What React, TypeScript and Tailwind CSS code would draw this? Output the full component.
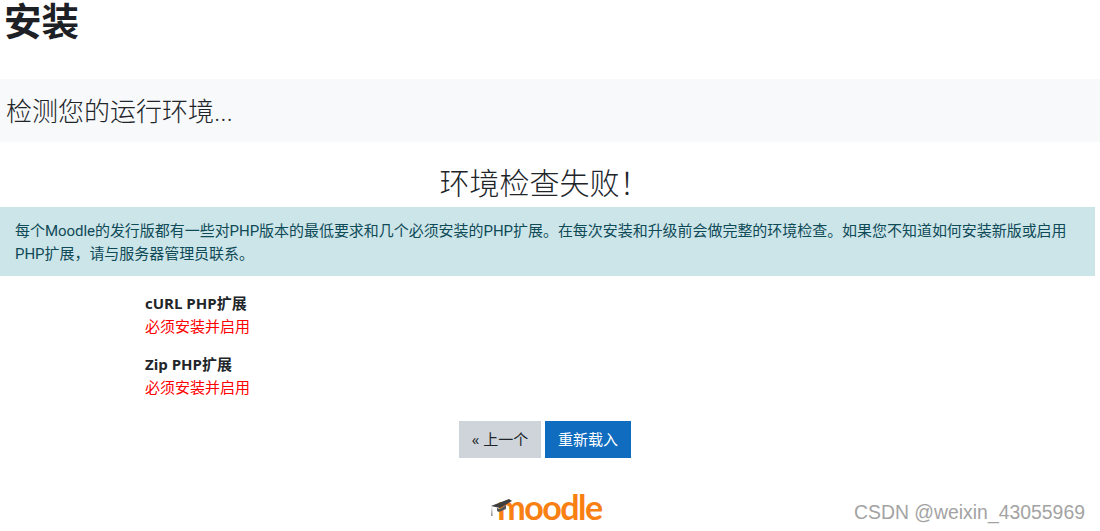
const font = "font-['Open_Sans','Noto_Sans_CJK_SC',sans-serif]";

const checks = [
  { name: 'cURL PHP扩展', status: '必须安装并启用' },
  { name: 'Zip PHP扩展', status: '必须安装并启用' },
];

const MoodleLogo = () => (
  <div className="flex items-end justify-center h-[34px] pr-[8px]">
    <svg width="24" height="24" viewBox="0 0 24 24" className="mb-[4px] mr-[-17px] z-10">
      <path d="M1 10 L19 3 L22 5 L10 12 Z" fill="#3f3f3f" />
      <path d="M7 12 L10 13 L16 9 L16 13 L9 16 L7 15 Z" fill="#555555" />
      <path d="M2 10 L2.6 20 L1 20 Z" fill="#8a8a8a" />
    </svg>
    <span className="font-['Lato',sans-serif] font-bold text-[34px] leading-[34px] tracking-[-1.5px] text-[#f98012]">
      moodle
    </span>
  </div>
);

const App = () => {
  return (
    <div className={`relative w-[1100px] h-[531px] overflow-hidden bg-white text-[#212529] ${font}`}>
      <h1 className="h-[79px] pl-[4px] text-[37.5px] leading-[42px] font-bold text-[#1d2125]">安装</h1>

      <div className="h-[63px] bg-[#f8f9fa] pl-[6px] flex items-center">
        <h2 className="text-[26px] font-light leading-[40px] text-[#212529]">检测您的运行环境...</h2>
      </div>

      <h3 className="h-[65px] pt-[21px] pr-[11px] text-center text-[30px] leading-[40px] font-light text-[#212529]">
        环境检查失败！
      </h3>

      <div className="w-[1095px] h-[69px] bg-[#cce5e9] px-[15px] pt-[13px] font-['Roboto','Noto_Sans_CJK_SC',sans-serif] text-[15px] tracking-[-0.04px] leading-[23px] text-[#0f4a57]">
        每个Moodle的发行版都有一些对PHP版本的最低要求和几个必须安装的PHP扩展。在每次安装和升级前会做完整的环境检查。如果您不知道如何安装新版或启用PHP扩展，请与服务器管理员联系。
      </div>

      <div className="pl-[145px] pt-[16px] flex flex-col gap-[15px] text-[15px] leading-[23px]">
        {checks.map((check) => (
          <div key={check.name}>
            <div className="font-bold text-[#212529]">{check.name}</div>
            <div className="text-[#ff0000]">{check.status}</div>
          </div>
        ))}
      </div>

      <div className="mt-[22px] flex justify-center gap-[4px] text-[15px] pr-[10px]">
        <button className="w-[82px] h-[37px] bg-[#ced4da] text-[#212529]">« 上一个</button>
        <button className="w-[86px] h-[37px] bg-[#0f6cbf] text-white">重新载入</button>
      </div>

      <div className="mt-[32px]">
        <MoodleLogo />
      </div>

      <span className="absolute left-[854px] top-[500px] text-[19.4px] leading-[24px] font-['Liberation_Sans',sans-serif] text-[#a3a3a3]">
        CSDN @weixin_43055969
      </span>
    </div>
  );
};

export default App;
